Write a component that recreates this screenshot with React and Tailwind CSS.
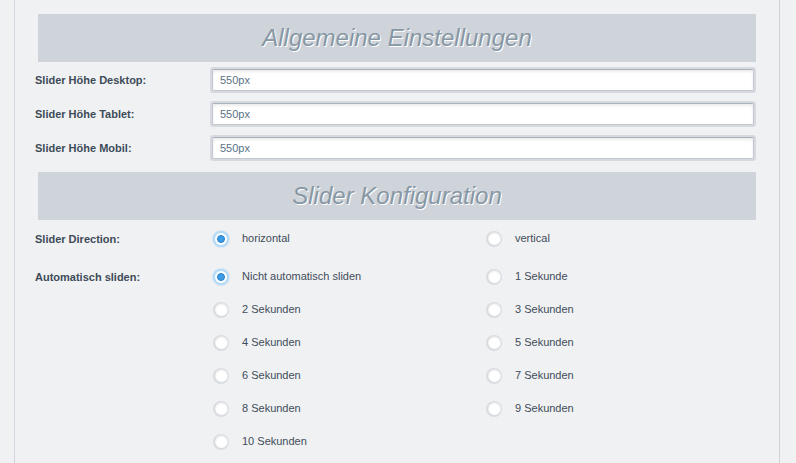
import React from "react";

const font = { fontFamily: '"Liberation Sans", Arial, Helvetica, sans-serif' };

function SectionHeader({ children }) {
  return (
    <div className="ml-[3px] flex h-[48px] items-center justify-center bg-[#cfd3da]">
      <h2 className="text-[24px] italic leading-none text-[#8797a4] [text-shadow:1px_1px_0_#ffffff]">
        {children}
      </h2>
    </div>
  );
}

function TextRow({ label, value }) {
  return (
    <div className="flex h-[26px] items-center">
      <label className="w-[175px] shrink-0 pt-[1px] text-[11px] font-bold text-[#3d4b58]">
        {label}
      </label>
      <div className="flex-1 rounded-[3px] bg-[#d6dae0] p-[2px]">
        <div className="flex h-[22px] items-center rounded-[2px] border border-[#c2c8ce] border-t-[#a7b1ba] bg-white pl-[7px] text-[11px] text-[#5b7286] shadow-[inset_0_2px_3px_rgba(0,0,0,0.08)]">
          {value}
        </div>
      </div>
    </div>
  );
}

function Radio({ checked }) {
  if (checked) {
    return (
      <span className="flex h-[16px] w-[16px] items-center justify-center rounded-full bg-[#b4dbf7] shadow-[0_0_2px_#9fcff3]">
        <span className="flex h-[12px] w-[12px] items-center justify-center rounded-full bg-white">
          <span className="h-[8px] w-[8px] rounded-full border border-[#2b7fc4] bg-[#3b9de8]" />
        </span>
      </span>
    );
  }
  return (
    <span className="flex h-[16px] w-[16px] items-center justify-center rounded-full bg-[#d9dce1]">
      <span className="h-[13px] w-[13px] rounded-full bg-white shadow-[inset_0_1px_2px_rgba(0,0,0,0.12)]" />
    </span>
  );
}

function Option({ label, checked }) {
  return (
    <div className="flex h-[33px] items-center">
      <span className="ml-[3px]">
        <Radio checked={checked} />
      </span>
      <span className="ml-[13px] text-[11px] text-[#3f4c59]">{label}</span>
    </div>
  );
}

function RadioGroup({ label, options, className = "" }) {
  return (
    <div className={`flex ${className}`}>
      <div className="w-[175px] shrink-0 pt-[9px] text-[11px] font-bold text-[#3d4b58]">
        {label}
      </div>
      <div className="grid flex-1 grid-cols-[273px_1fr]">
        {options.map((o) => (
          <Option key={o.label} label={o.label} checked={o.checked} />
        ))}
      </div>
    </div>
  );
}

export default function App() {
  const intervals = [
    { label: "Nicht automatisch sliden", checked: true },
    { label: "1 Sekunde" },
    { label: "2 Sekunden" },
    { label: "3 Sekunden" },
    { label: "4 Sekunden" },
    { label: "5 Sekunden" },
    { label: "6 Sekunden" },
    { label: "7 Sekunden" },
    { label: "8 Sekunden" },
    { label: "9 Sekunden" },
    { label: "10 Sekunden" },
  ];

  return (
    <div className="min-h-[463px] bg-[#f0f1f3] pl-[14px]" style={font}>
      <div className="w-[766px] min-h-[463px] border-l border-r border-l-[#d3d6de] border-r-[#cfd2d6] pl-[20px] pr-[23px] pt-[14px]">
        <SectionHeader>Allgemeine Einstellungen</SectionHeader>

        <div className="mt-[5px] flex flex-col gap-[8px]">
          <TextRow label="Slider Höhe Desktop:" value="550px" />
          <TextRow label="Slider Höhe Tablet:" value="550px" />
          <TextRow label="Slider Höhe Mobil:" value="550px" />
        </div>

        <div className="mt-[11px]">
          <SectionHeader>Slider Konfiguration</SectionHeader>
        </div>

        <RadioGroup
          className="mt-[2px]"
          label="Slider Direction:"
          options={[
            { label: "horizontal", checked: true },
            { label: "vertical" },
          ]}
        />

        <RadioGroup className="mt-[5px]" label="Automatisch sliden:" options={intervals} />
      </div>
    </div>
  );
}
